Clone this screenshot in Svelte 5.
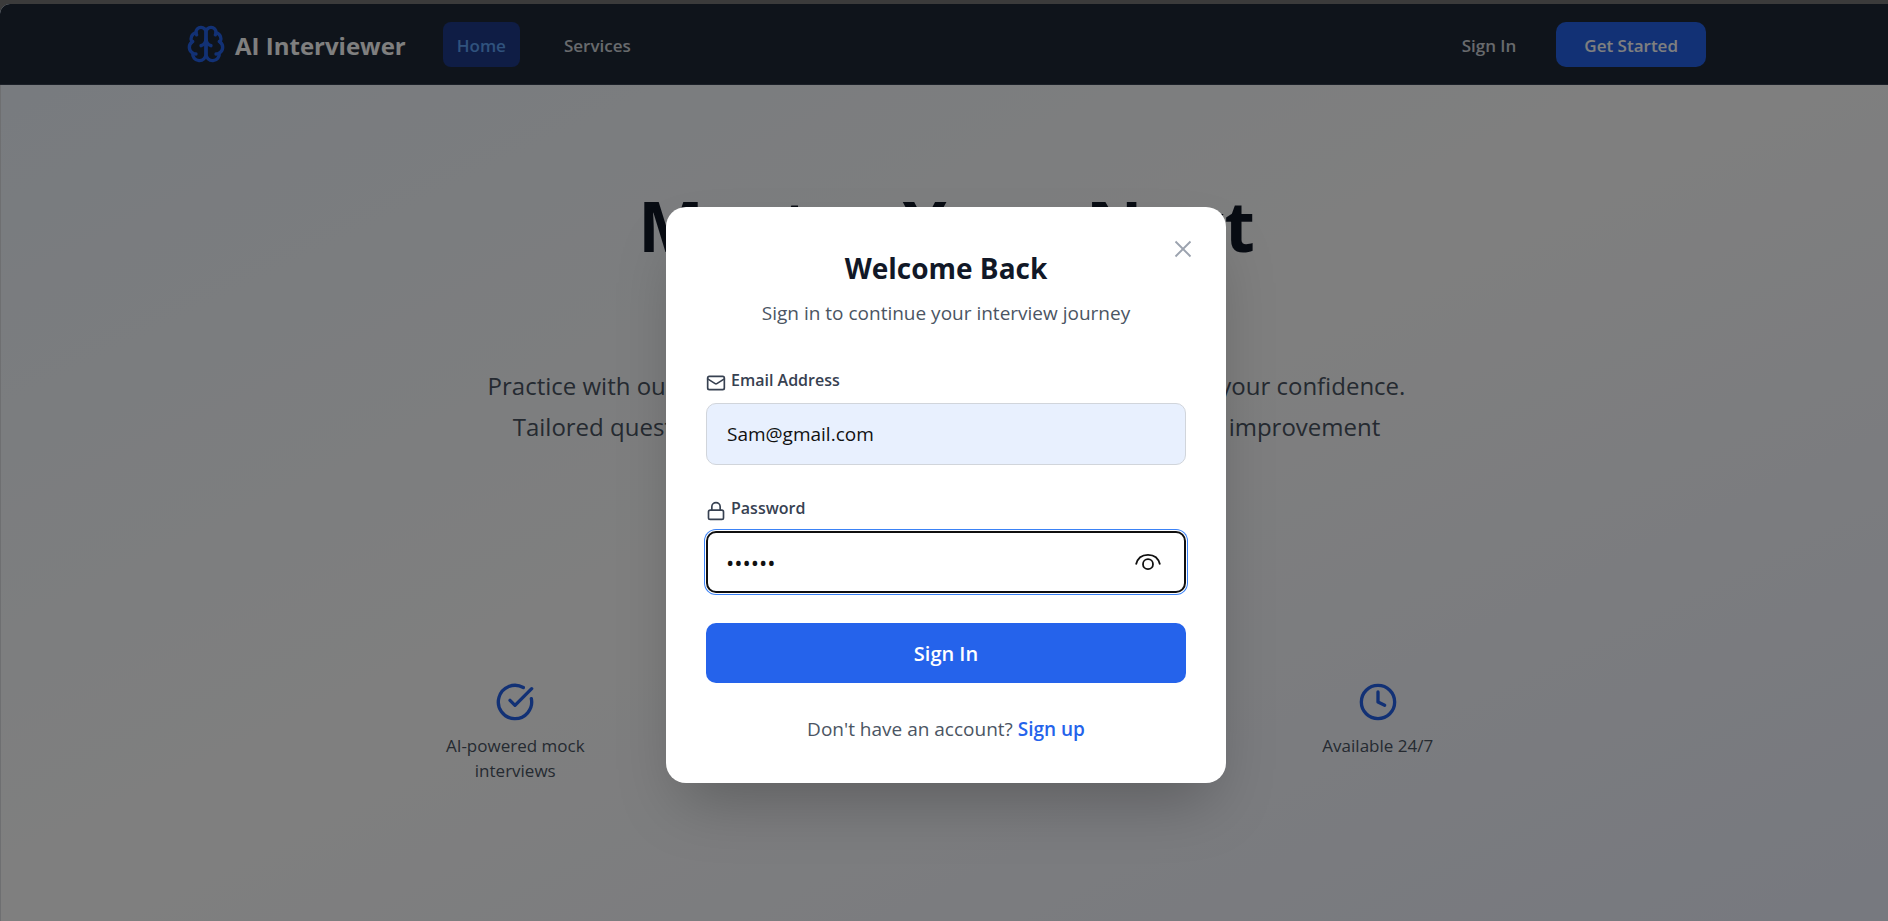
<script>
  let email = $state('Sam@gmail.com');
  let password = $state('secret');
  let reveal = $state(false);

  const features = [
    { icon: 'check', label: 'AI-powered mock interviews' },
    { icon: 'clock', label: 'Instant feedback' },
    { icon: 'check', label: 'Track progress' },
    { icon: 'clock', label: 'Available 24/7' }
  ];
</script>

<div class="shell">
  <header>
    <div class="bar">
      <a class="brand" href="#home">
        <svg class="line" width="40" height="40" viewBox="0 0 24 24" aria-hidden="true">
          <path d="M12 5a3 3 0 1 0-5.997.125 4 4 0 0 0-2.526 5.77 4 4 0 0 0 .556 6.588A4 4 0 1 0 12 18Z" />
          <path d="M12 5a3 3 0 1 1 5.997.125 4 4 0 0 1 2.526 5.77 4 4 0 0 1-.556 6.588A4 4 0 1 1 12 18Z" />
          <path d="M15 13a4.5 4.5 0 0 1-3-4 4.5 4.5 0 0 1-3 4" />
          <path d="M17.599 6.5a3 3 0 0 0 .399-1.375" />
          <path d="M6.003 5.125A3 3 0 0 0 6.401 6.5" />
          <path d="M3.477 10.896a4 4 0 0 1 .585-.396" />
          <path d="M19.938 10.5a4 4 0 0 1 .585.396" />
          <path d="M6 18a4 4 0 0 1-1.967-.516" />
          <path d="M19.967 17.484A4 4 0 0 1 18 18" />
        </svg>
        <span>AI Interviewer</span>
      </a>
      <nav>
        <a class="link active" href="#home">Home</a>
        <a class="link" href="#services">Services</a>
      </nav>
      <div class="actions">
        <button class="plain" type="button">Sign In</button>
        <button class="start" type="button">Get Started</button>
      </div>
    </div>
  </header>

  <main>
    <h1>Master Your Next<br />Interview</h1>
    <p class="lead">
      Practice with our AI-powered simulator, sharpen skills, and boost your confidence.<br />
      Tailored questions, instant feedback, and guidance for constant improvement
    </p>
    <ul class="features">
      {#each features as feature}
        <li>
          <svg class="line" width="40" height="40" viewBox="0 0 24 24" aria-hidden="true">
            {#if feature.icon === 'check'}
              <path d="M21.801 10A10 10 0 1 1 17 3.335" />
              <path d="m9 11 3 3L22 4" />
            {:else}
              <circle cx="12" cy="12" r="10" />
              <path d="M12 6v6l4 2" />
            {/if}
          </svg>
          <span>{feature.label}</span>
        </li>
      {/each}
    </ul>
  </main>

  <div class="overlay">
    <div class="modal" role="dialog" aria-modal="true" aria-labelledby="title">
      <button class="close" type="button" aria-label="Close">
        <svg width="30" height="30" viewBox="0 0 24 24" aria-hidden="true"><path d="M18 6 6 18M6 6l12 12" /></svg>
      </button>
      <h2 id="title">Welcome Back</h2>
      <p class="sub">Sign in to continue your interview journey</p>
      <form onsubmit={(e) => e.preventDefault()}>
        <div class="field">
          <label for="email">
            <svg class="line" width="20" height="20" viewBox="0 0 24 24" aria-hidden="true">
              <rect x="2" y="4" width="20" height="16" rx="2" />
              <path d="m22 7-8.97 5.7a1.94 1.94 0 0 1-2.06 0L2 7" />
            </svg>
            <span>Email Address</span>
          </label>
          <input id="email" class="filled" type="email" bind:value={email} />
        </div>
        <div class="field">
          <label for="password">
            <svg class="line" width="20" height="20" viewBox="0 0 24 24" aria-hidden="true">
              <rect x="3" y="11" width="18" height="11" rx="2" />
              <path d="M7 11V7a5 5 0 0 1 10 0v4" />
            </svg>
            <span>Password</span>
          </label>
          <div class="secret">
            <input id="password" type={reveal ? 'text' : 'password'} bind:value={password} />
            <button class="eye" type="button" aria-label="Show password" onclick={() => (reveal = !reveal)}>
              <svg width="26" height="20" viewBox="0 0 26 20" aria-hidden="true">
                <path d="M1 12.500C2.500 6 7 2.800 13 2.800S23.500 6 25 12.500" />
                <circle cx="13" cy="12.200" r="5" />
              </svg>
            </button>
          </div>
        </div>
        <button class="submit" type="submit">Sign In</button>
      </form>
      <p class="foot">Don't have an account? <a href="#signup">Sign up</a></p>
    </div>
  </div>
</div>

<style>
  :global(body) {
    background: #3b3b3b;
    overflow: hidden;
  }
  .shell {
    position: relative;
    display: flex;
    flex-direction: column;
    min-height: calc(100vh - 4px);
    margin: 4px -4px 0 0;
    overflow: hidden;
    border-top-left-radius: 10px;
    background: linear-gradient(to bottom right, #eff6ff, #ffffff, #eef2ff);
    font-family: 'Open Sans', 'Noto Sans', sans-serif;
    font-size: 19px;
  }
  .shell * {
    box-sizing: border-box;
  }
  a {
    text-decoration: none;
  }
  button {
    border: 0;
    background: none;
    padding: 0;
    font: inherit;
    cursor: pointer;
  }
  svg {
    display: block;
    flex: none;
    fill: none;
    stroke: currentColor;
  }
  .line {
    stroke-width: 2;
    stroke-linecap: round;
    stroke-linejoin: round;
  }
  header {
    background: #1f2937;
    border-bottom: 1px solid #374151;
  }
  .bar {
    display: flex;
    align-items: center;
    max-width: 1600px;
    height: 80px;
    margin: 0 auto;
    padding: 0 40px;
    font-size: 17px;
    font-weight: 600;
    line-height: 43px;
  }
  .brand {
    display: flex;
    align-items: center;
    gap: 9px;
    color: #ffffff;
    font-size: 24px;
    font-weight: 700;
  }
  .brand svg {
    color: #2563eb;
  }
  .brand span {
    padding-top: 2px;
  }
  nav {
    display: flex;
    gap: 30px;
    margin-left: 37px;
  }
  .link {
    padding: 2px 14px 0;
    border-radius: 8px;
    color: #d1d5db;
  }
  .active {
    background: #1e3a8a;
    color: #60a5fa;
  }
  .actions {
    display: flex;
    gap: 40px;
    margin-left: auto;
  }
  .plain {
    padding: 2px 0 0;
    color: #d1d5db;
    line-height: 43px;
  }
  .start {
    padding: 2px 28px 0;
    border-radius: 10px;
    background: #2563eb;
    color: #ffffff;
    line-height: 43px;
  }
  main {
    flex: 1;
    padding: 103px 40px 0;
    border-left: 1px solid #dddfe2;
    text-align: center;
  }
  h1 {
    margin: 0;
    color: #111827;
    font-size: 70px;
    font-weight: 700;
    line-height: 75px;
  }
  .lead {
    margin: 27px 0 0;
    color: #4b5563;
    font-size: 24px;
    line-height: 41px;
  }
  .features {
    display: grid;
    grid-template-columns: repeat(4, 1fr);
    gap: 30px;
    max-width: 1120px;
    margin: 235px auto 0;
    padding: 0;
    list-style: none;
  }
  li {
    display: flex;
    flex-direction: column;
    align-items: center;
    gap: 11px;
    padding: 0 50px;
    color: #4b5563;
    font-size: 17px;
    line-height: 25px;
  }
  li svg {
    color: #2563eb;
  }
  .overlay {
    position: absolute;
    inset: 0;
    display: flex;
    align-items: center;
    justify-content: center;
    padding: 64px 20px 0;
    background: rgba(0, 0, 0, 0.5);
  }
  .modal {
    position: relative;
    width: 100%;
    max-width: 560px;
    padding: 40px;
    border-radius: 20px;
    background: #ffffff;
    box-shadow: 0 31px 62px -15px rgba(0, 0, 0, 0.25);
  }
  .close {
    position: absolute;
    top: 27px;
    right: 28px;
    color: #9ca3af;
  }
  .close path {
    stroke-width: 1.5;
  }
  h2 {
    margin: 0;
    color: #111827;
    font-size: 28px;
    font-weight: 700;
    line-height: 42px;
    text-align: center;
  }
  .sub {
    margin: 9px 0 39px;
    color: #4b5563;
    line-height: 30px;
    text-align: center;
  }
  form {
    display: grid;
    gap: 30px;
  }
  label {
    display: flex;
    align-items: flex-end;
    gap: 5px;
    margin-bottom: 10px;
    color: #374151;
    font-size: 16px;
    font-weight: 600;
    line-height: 26px;
  }
  input {
    display: block;
    width: 100%;
    height: 62px;
    padding: 0 20px;
    border: 1px solid #d1d5db;
    border-radius: 10px;
    outline: none;
    background: #ffffff;
    color: #111111;
    font: inherit;
  }
  .filled {
    background: #e8f0fe;
  }
  .secret {
    position: relative;
  }
  .secret input {
    padding: 0 18px;
    border: 2px solid #101010;
    box-shadow: 0 0 0 1px #ffffff, 0 0 0 2px #3b82f6;
    font-size: 22px;
  }
  .eye {
    position: absolute;
    top: 21px;
    right: 25px;
    color: #101010;
  }
  .eye svg {
    stroke-width: 1.8;
  }
  .submit {
    height: 60px;
    padding-top: 2px;
    border-radius: 10px;
    background: #2563eb;
    color: #ffffff;
    font-size: 20px;
    font-weight: 600;
  }
  .foot {
    margin: 31px 0 -1px;
    color: #4b5563;
    line-height: 30px;
    text-align: center;
  }
  .foot a {
    color: #2563eb;
    font-weight: 600;
  }
</style>
